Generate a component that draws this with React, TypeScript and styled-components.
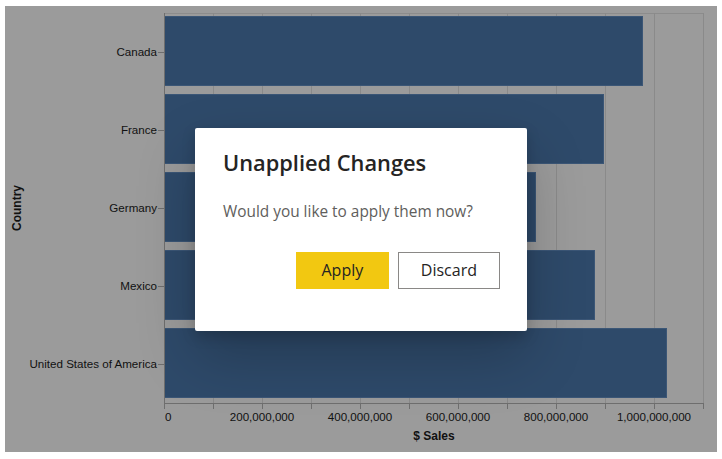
import React from "react";
import styled, { createGlobalStyle } from "styled-components";

const GlobalStyle = createGlobalStyle`
  html, body { margin: 0; padding: 0; background: #ffffff; }
  * { box-sizing: border-box; }
`;

const Page = styled.div`
  width: 722px;
  height: 459px;
  padding: 6px 5px 7px 5px;
  background: #ffffff;
`;

const Frame = styled.div`
  position: relative;
  width: 712px;
  height: 446px;
  background: #9b9b9b;
  overflow: hidden;
`;

const ChartSvg = styled.svg`
  display: block;
  font-family: "Liberation Sans", Arial, sans-serif;
`;

const Overlay = styled.div`
  position: absolute;
  inset: 0;
  display: flex;
  align-items: center;
  justify-content: center;
`;

const Dialog = styled.div`
  width: 332px;
  height: 203px;
  background: #ffffff;
  border-radius: 2px;
  padding: 21px 28px 0 28px;
  display: flex;
  flex-direction: column;
  box-shadow: 0 25px 58px rgba(0, 0, 0, 0.22), 0 5px 14px rgba(0, 0, 0, 0.18);
  font-family: "Open Sans", "Noto Sans", sans-serif;
`;

const Title = styled.h2`
  margin: 0;
  font-size: 21.8px;
  line-height: 28px;
  font-weight: 600;
  color: #252423;
  white-space: nowrap;
`;

const Message = styled.p`
  margin: 24px 0 0 0;
  font-size: 15.4px;
  line-height: 22px;
  color: #605e5c;
  white-space: nowrap;
`;

const Actions = styled.div`
  display: flex;
  justify-content: flex-end;
  gap: 9px;
  margin-top: 29px;
  margin-right: -1px;
`;

const Button = styled.button<{ $primary?: boolean }>`
  height: 37px;
  min-width: 93px;
  padding: 0 22px;
  font-family: inherit;
  font-size: 16px;
  color: #252423;
  background: ${(p) => (p.$primary ? "#f2c811" : "#ffffff")};
  border: 1px solid ${(p) => (p.$primary ? "#f2c811" : "#8a8886")};
  border-radius: 0;
  display: flex;
  align-items: center;
  justify-content: center;
  cursor: pointer;
`;

type Row = { country: string; value: number };

const data: Row[] = [
  { country: "Canada", value: 978 },
  { country: "France", value: 898 },
  { country: "Germany", value: 759 },
  { country: "Mexico", value: 880 },
  { country: "United States of America", value: 1027 },
];

const X0 = 164;
const PX_PER_M = 0.49; // pixels per million
const TOP = 13;
const BOTTOM = 403;
const BAND = (BOTTOM - TOP) / data.length;
const RIGHT = X0 + 1100 * PX_PER_M;
const LABEL_SIZE = 11.6;

const Chart: React.FC = () => {
  const grid = Array.from({ length: 12 }, (_, i) => i);
  return (
    <ChartSvg width={712} height={446} viewBox="5 6 712 446">
      {/* top border */}
      <line x1={X0} x2={RIGHT} y1={TOP + 0.5} y2={TOP + 0.5} stroke="#8c8c8c" />
      {/* vertical gridlines */}
      {grid.slice(1).map((i) => {
        const x = Math.round(X0 + i * 100 * PX_PER_M) + 0.5;
        return <line key={i} x1={x} x2={x} y1={TOP} y2={BOTTOM} stroke="#8a8a8a" />;
      })}
      {/* bars */}
      {data.map((d, i) => {
        const y = Math.round(TOP + i * BAND + 3);
        const w = Math.round(d.value * PX_PER_M);
        return (
          <rect
            key={d.country}
            x={X0 + 0.5}
            y={y + 0.5}
            width={w - 1}
            height={69}
            fill="#2e4a6a"
            stroke="#3b5676"
          />
        );
      })}
      {/* y axis */}
      <line x1={X0 + 0.5} x2={X0 + 0.5} y1={TOP} y2={BOTTOM + 1} stroke="#6e6e6e" />
      {data.map((d, i) => {
        const cy = Math.round(TOP + i * BAND + BAND / 2);
        return (
          <g key={d.country}>
            <line x1={X0 - 6} x2={X0} y1={cy + 0.5} y2={cy + 0.5} stroke="#6e6e6e" />
            <text x={X0 - 7} y={cy + 4} fontSize={LABEL_SIZE} textAnchor="end" fill="#111111">
              {d.country}
            </text>
          </g>
        );
      })}
      {/* x axis */}
      <line x1={X0} x2={RIGHT + 1} y1={BOTTOM + 0.5} y2={BOTTOM + 0.5} stroke="#6e6e6e" />
      {grid.map((i) => {
        const x = Math.round(X0 + i * 100 * PX_PER_M) + 0.5;
        return <line key={i} x1={x} x2={x} y1={BOTTOM} y2={BOTTOM + 6} stroke="#6e6e6e" />;
      })}
      {grid
        .filter((i) => i % 2 === 0 && i <= 10)
        .map((i) => {
          const x = Math.round(X0 + i * 100 * PX_PER_M);
          const label = (i * 100_000_000).toLocaleString("en-US");
          return (
            <text
              key={i}
              x={i === 0 ? x + 1 : x}
              y={421}
              fontSize={LABEL_SIZE}
              textAnchor={i === 0 ? "start" : "middle"}
              fill="#111111"
            >
              {label}
            </text>
          );
        })}
      <text x={434} y={440} fontSize={12} fontWeight="bold" textAnchor="middle" fill="#111111">
        $ Sales
      </text>
      <text
        x={0}
        y={0}
        fontSize={12}
        fontWeight="bold"
        textAnchor="middle"
        fill="#111111"
        transform="translate(21 208) rotate(-90)"
      >
        Country
      </text>
    </ChartSvg>
  );
};

export default function App() {
  return (
    <>
      <GlobalStyle />
      <Page>
        <Frame>
          <Chart />
          <Overlay>
            <Dialog role="dialog" aria-labelledby="dlg-title">
              <Title id="dlg-title">Unapplied Changes</Title>
              <Message>Would you like to apply them now?</Message>
              <Actions>
                <Button $primary>Apply</Button>
                <Button>Discard</Button>
              </Actions>
            </Dialog>
          </Overlay>
        </Frame>
      </Page>
    </>
  );
}
